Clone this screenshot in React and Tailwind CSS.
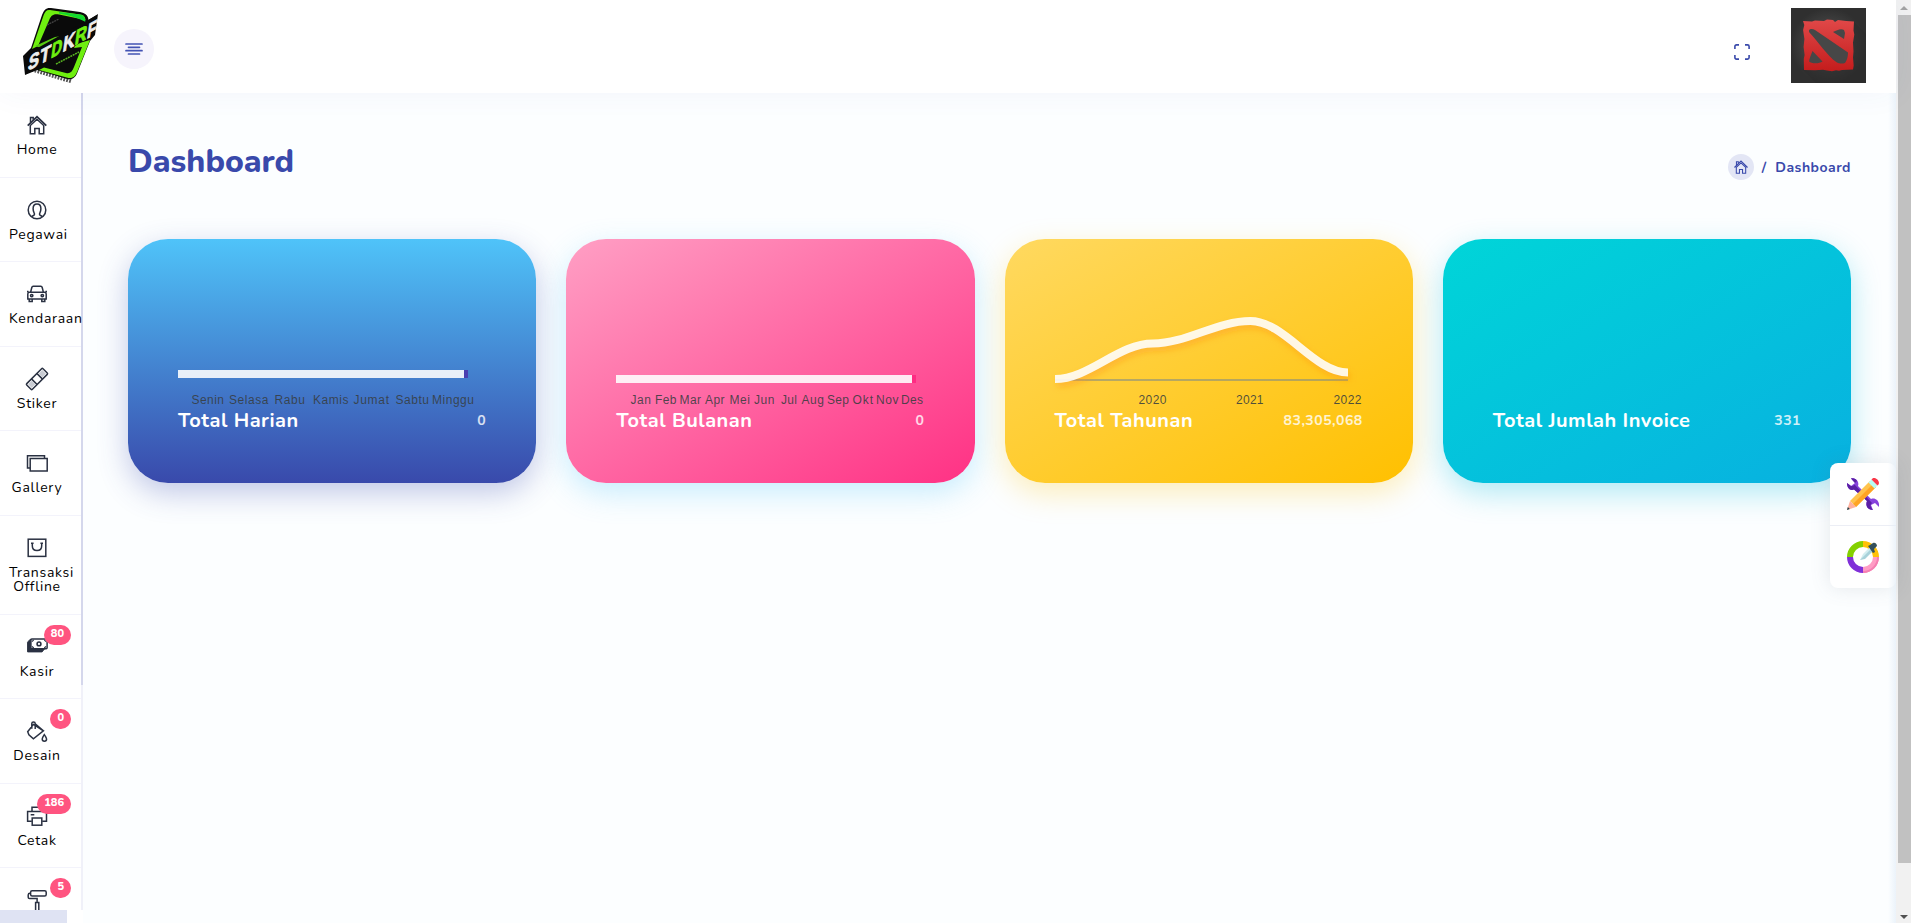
import React from "react";

const INK = "#2a3142";

const icon = {
  home: (
    <g>
      <path d="M.7 10.700 10 1.700l9.300 9" strokeWidth="1.700" />
      <path d="M3.500 7.500V2.600h2.700v2.200M3.300 10.500v8.300h4.500v-5.300h4.400v5.300h4.500v-8.300L10 4.200z" />
    </g>
  ),
  user: (
    <g>
      <circle cx="10" cy="10" r="8.800" />
      <path d="M4.500 16.600c1.200-1.100 3-.9 3-2.300 0-1.200-1.400-2.500-1.400-5.600C6.100 5.600 7.500 4 10 4s3.900 1.600 3.900 4.700c0 3.100-1.400 4.400-1.400 5.600 0 1.400 1.800 1.200 3 2.300" />
    </g>
  ),
  car: (
    <g>
      <path d="M3.600 8.300 4.800 3.500c.2-.8.600-1.200 1.400-1.200h7.600c.8 0 1.200.4 1.400 1.200l1.200 4.800M0 7.400h1.500M18.500 7.400H20M.8 14.900v-5c0-1 .6-1.600 1.600-1.600h15.200c1 0 1.600.6 1.600 1.600v5zM2.200 15v2.600h3V15M14.800 15v2.600h3V15" />
      <circle cx="4.700" cy="11.600" r="1.200" />
      <circle cx="15.300" cy="11.600" r="1.200" />
    </g>
  ),
  sticker: (
    <g transform="rotate(-45 10 10)">
      <rect x="-1.500" y="6" width="23" height="8" rx="1" />
      <rect x="0" y="7.400" width="5" height="5.200" fill="#c9ccd3" stroke="none" />
      <rect x="15" y="7.400" width="5" height="5.200" fill="#c9ccd3" stroke="none" />
      <path d="M6.200 6v8M13.800 6v8" />
    </g>
  ),
  gallery: (
    <g>
      <path d="M3.300 15H.5V2.700h17v2.600" />
      <rect x="3.200" y="5.500" width="17" height="12.500" />
    </g>
  ),
  bag: (
    <g>
      <rect x="1.200" y="1.200" width="17.600" height="17.200" />
      <path d="M4 5.300h2.600M13.400 5.300H16M5.300 5.500v2.200c0 2.800 1.900 4.800 4.700 4.800s4.700-2 4.700-4.800V5.500" />
    </g>
  ),
  cash: (
    <g>
      <path d="M.6 5.200 3 2.400h2v9.400h12.500l-2.400 3.100H.6z" fill={INK} stroke={INK} strokeWidth="1" />
      <rect x="3.900" y="2" width="16.200" height="9.800" rx="1" fill="#fff" />
      <circle cx="12" cy="6.900" r="1.900" strokeWidth="1.600" />
      <path d="M5 4.700 6.700 2.800M19 4.700 17.300 2.800M5 9.300 6.700 11M19 9.300 17.300 11" strokeWidth="1.100" />
    </g>
  ),
  bucket: (
    <g>
      <path d="M4.800 7.800V2.600C4.800.5 8.200.5 8.200 2.600V8M6.500 3.400.700 10.700l1.200 3 4.500 4.100 10-7.900zM8.200 2.800l8.200 7.100" />
      <path d="M17.300 13.600c-1.500 2.200-2.100 3.200-2.100 4.400a2.200 2.200 0 0 0 4.400 0c0-1.200-.7-2.200-2.300-4.400z" />
    </g>
  ),
  printer: (
    <g>
      <path d="M5 5.500V1.200h10v4.300M4.800 15.300H.6V5.600h18.900v9.700h-4.300M3.700 8.800h3.600" />
      <rect x="5.200" y="12" width="9.600" height="7.200" />
    </g>
  ),
  roller: (
    <g>
      <rect x="3.600" y=".8" width="15.600" height="5.200" rx="1.500" />
      <path d="M3.600 3.300H3c-1 0-1.800.6-1.800 1.600v2.300c0 .8.500 1.300 1.300 1.300h7.600v3.700M8.600 12.400h3.200V22H8.600z" />
    </g>
  ),
};

function Glyph({ name, size = 20, color = INK, className = "" }) {
  return (
    <svg
      width={size}
      height={size}
      viewBox="0 0 20 20"
      fill="none"
      stroke={color}
      strokeWidth="1.5"
      className={`shrink-0 overflow-visible ${className}`}
    >
      {icon[name]}
    </svg>
  );
}

const menu = [
  { name: "home", label: "Home", box: "h-[85px]" },
  { name: "user", label: "Pegawai", box: "h-[84px]" },
  { name: "car", label: "Kendaraan", box: "h-[85px]" },
  { name: "sticker", label: "Stiker", box: "h-[84px]" },
  { name: "gallery", label: "Gallery", box: "h-[85px]" },
  { name: "bag", label: "Transaksi Offline", box: "h-[99px]" },
  { name: "cash", label: "Kasir", box: "h-[84px]", badge: "80" },
  { name: "bucket", label: "Desain", box: "h-[85px]", badge: "0" },
  { name: "printer", label: "Cetak", box: "h-[84px]", badge: "186" },
  { name: "roller", label: "", box: "h-[84px]", badge: "5" },
];

function Logo() {
  return (
    <svg width="77" height="77" viewBox="0 0 77 77" className="shrink-0 overflow-visible">
      <path d="M10 62 50 74" stroke="#555" strokeWidth="5" strokeDasharray="1.800 1.200" />
      <path d="M29 1 58 5c5 1 8 3 8.500 8L76 7l-3 21-5 6-12 30c-2 6-5 9-11 8L15 63 3 68 1 49l8-8L20 8c2-5 4-7.500 9-7z" fill="#0a0a0a" />
      <path d="M28 3 58 7.500c4 .6 5 2 5.500 5.500L37 7.500c-6-1-8 1-10 6L16 39l-6 3L21.500 8.500C23 4.500 24.500 2.500 28 3z" fill="#6fef10" />
      <path d="M37 5 58 7.500c4 .6 5.500 3.500 5.500 7.500C56 11 48 8.500 37 6.500z" fill="#12d930" />
      <path d="m68 33-12.500 31c-2 5-4 7.500-9 7L17 63l5-2.500 22 5.500c4 1 6-1 8-6l8-20-8 1 2-4z" fill="#6fef10" />
      <path d="M13 39 33 30l14-2L22 42z" fill="#57c912" />
      <path d="M3 48 75 8l-3 20L4 67z" fill="#0a0a0a" />
      <g transform="matrix(.9 -.49 -.14 1 5.500 64)" fontFamily="Liberation Sans, Arial, sans-serif" fontWeight="700" fontSize="21.500" strokeWidth=".9">
        <text x="0" y="0" textLength="12" lengthAdjust="spacingAndGlyphs" fill="#eee" stroke="#eee">S</text>
        <text x="13" y="0" textLength="11.500" lengthAdjust="spacingAndGlyphs" fill="#eee" stroke="#eee">T</text>
        <text x="25.500" y="0" textLength="12" lengthAdjust="spacingAndGlyphs" fill="#6fef10" stroke="#6fef10">D</text>
        <text x="38.500" y="0" textLength="13" lengthAdjust="spacingAndGlyphs" fill="#eee" stroke="#eee">K</text>
        <text x="52" y="0" textLength="13" lengthAdjust="spacingAndGlyphs" fill="#6fef10" stroke="#6fef10">R</text>
        <text x="65.500" y="0" textLength="10" lengthAdjust="spacingAndGlyphs" fill="#eee" stroke="#eee">F</text>
      </g>
      <path d="m25 18 12-6" stroke="#444" strokeWidth="1.300" strokeDasharray="2 .7" />
      <path d="M34 57l23-12" stroke="#57b321" strokeWidth="1.500" strokeDasharray="2 .7" />
    </svg>
  );
}

function Avatar() {
  return (
    <svg width="75" height="75" viewBox="0 0 75 75" className="shrink-0">
      <defs>
        <radialGradient id="avBg"><stop offset="0" stopColor="#5a5a5a" /><stop offset="1" stopColor="#2f2f2f" /></radialGradient>
        <linearGradient id="avRed" x2="0" y2="1"><stop offset="0" stopColor="#e04848" /><stop offset="1" stopColor="#c41c1c" /></linearGradient>
      </defs>
      <rect width="75" height="75" fill="url(#avBg)" />
      <path d="M63 14 75 26v49H25L12 62z" fill="#2b2b2b" opacity=".6" />
      <path fill="url(#avRed)" d="M12 13l9 .500 3-1 9 .5 3-1.500 6 .500 2 2 3-2 8 1 8 .5-.5 9 .8 4-1.300 8 .500 9-.5 6 .7 8-.7 4-11 .5-3 .8-3-.5-4 1-5-.8-4-.7-8 .5-11-.3-.2-11 .8-4-1-8 .8-8-1.300-9 1.200-5z" />
      <path d="M18 22c1-1.500 4-1.500 6 0l33 22.500c0 4-1 8-3 10.500-3 1-6 .5-8-.5C36 48 27 33 18 24zM42 24c4-2 8-4 11-2l1 3-1 6zM21.500 43l10 10.500c-3 2-9 2.500-13 .5-1-2 2-8 3-11z" fill="#474747" />
    </svg>
  );
}

function Chart({ id, labels, line, endX, flood, axis }) {
  return (
    <svg width="308" height="118" viewBox="0 0 308 118" className="block overflow-visible">
      <defs>
        <filter id={id} x="-10%" y="-50%" width="125%" height="200%">
          <feGaussianBlur stdDeviation="3" />
        </filter>
      </defs>
      {axis && <path d="M0 92H293" stroke="#6e8192" strokeOpacity=".5" strokeWidth="2" />}
      {axis ? (
        <path d={line} transform="translate(2 4)" fill="none" stroke={flood} strokeOpacity=".4" strokeWidth="8" filter={`url(#${id})`} />
      ) : (
        <rect x={endX} y={line - 4} width="4" height="8" fill={flood} />
      )}
      <path d={axis ? line : `M0 ${line}H${endX}`} fill="none" stroke="#fff" strokeOpacity=".88" strokeWidth="8" />
      <g fill="#373d3f" fillOpacity=".88" fontFamily="Liberation Sans, Arial, sans-serif" fontSize="12" letterSpacing=".5">
        {labels.map(([text, x, width]) => (
          <text key={text} x={x} y="116" textLength={width} lengthAdjust="spacing">{text}</text>
        ))}
      </g>
    </svg>
  );
}

const cards = [
  {
    title: "Total Harian", value: "0",
    skin: "bg-[linear-gradient(180deg,#4fc3f9_0%,#3949ab_100%)] shadow-[0_10px_30px_rgba(57,73,171,0.3)]",
    chart: {
      id: "daily", line: 86, endX: 286, flood: "#4a3fb0",
      labels: [["Senin", 13.500, 33], ["Selasa", 51, 40], ["Rabu", 96.500, 31], ["Kamis", 135, 36], ["Jumat", 175.500, 36], ["Sabtu", 217.500, 34], ["Minggu", 254, 42.500]],
    },
  },
  {
    title: "Total Bulanan", value: "0",
    skin: "bg-[linear-gradient(150deg,#ff9fc4_0%,#ff3184_100%)] shadow-[0_10px_30px_rgba(79,195,247,0.3)]",
    chart: {
      id: "monthly", line: 91, endX: 296, flood: "#ff2c83",
      labels: [["Jan", 14.500, 21], ["Feb", 39, 22], ["Mar", 63.500, 22], ["Apr", 89, 20], ["Mei", 113.500, 21], ["Jun", 138, 21], ["Jul", 165, 16.500], ["Aug", 185.500, 23], ["Sep", 211, 22.500], ["Okt", 236.500, 21], ["Nov", 260, 23], ["Des", 285, 22.500]],
    },
  },
  {
    title: "Total Tahunan", value: "83,305,068",
    skin: "bg-[linear-gradient(150deg,#ffd960_0%,#ffc000_100%)] shadow-[0_10px_30px_rgba(255,193,7,0.28)]",
    chart: {
      id: "yearly", axis: true, flood: "#ff8c1a",
      line: "M0 91C34.200 91 63.500 55.500 97.700 55.500C131.900 55.500 161.200 33 195.400 33C229.600 33 258.900 84.500 293 84.500",
      labels: [["2020", 83.500, 28.500], ["2021", 181, 28], ["2022", 278.500, 28.500]],
    },
  },
  {
    title: "Total Jumlah Invoice", value: "331",
    skin: "bg-[linear-gradient(150deg,#00d5d8_0%,#08b0e0_100%)] shadow-[0_10px_30px_rgba(0,184,217,0.3)]",
  },
];

function Card({ title, value, skin, chart }) {
  return (
    <section className={`flex h-[244px] flex-col rounded-[40px] px-[50px] pt-[49px] ${skin}`}>
      <div className="h-[121px]">{chart && <Chart {...chart} />}</div>
      <div className="flex items-center justify-between">
        <h2 className="text-[20px] leading-6 font-bold tracking-[0.5px] text-white">{title}</h2>
        <span className="text-[14px] leading-5 font-bold tracking-[0.5px] text-white/80">{value}</span>
      </div>
    </section>
  );
}

function ToolsIcon() {
  return (
    <svg width="32" height="32" viewBox="0 0 32 32">
      <path d="M4 .5C9-.5 12.500 4 11 8l13 13c5-2 9 3 8 8l-4-4-4 2 2 5c-5 0-8-4-6-9L7 11.500C3 13 0 10 0 5l4 3 4-3z" fill="#8742dc" />
      <path d="M0 5l4 3h2l1.500-1.500L25 25l-1.500 2c0 2 1.500 4 2.500 5-5 0-8-4-6-9L7 11.500C3 13 0 10 0 5zM4 .5C7 0 9 1 10 3L8 5z" fill="#5a1fa5" />
      <path d="m3 23 20-20 6 6L9 29z" fill="#ffc34d" />
      <path d="m6 26 20-20 3 3L9 29z" fill="#ffa424" />
      <path d="m3 23 6 6-9 3z" fill="#ffb09e" />
      <path d="m.8 29 2 2L0 32z" fill="#21424c" />
      <path d="m21.500 4.500 3-3 6 6-3 3z" fill="#b9fbf2" />
      <path d="m24.500 1.500 1-1c3-2 8 3 6 6l-1 1z" fill="#fa3648" />
    </svg>
  );
}

function PaletteIcon() {
  return (
    <svg width="32" height="32" viewBox="0 0 32 32" fill="none" strokeWidth="6">
      <path d="M3 16A13 13 0 0 1 16 3" stroke="#84d000" />
      <path d="M16 3a13 13 0 0 1 13 13" stroke="#ffc107" />
      <path d="M29 16a13 13 0 0 1-13 13" stroke="#ff9cc4" />
      <path d="M31 16A15 15 0 0 1 16 31" stroke="#f57fb2" strokeWidth="2" />
      <path d="M16 29A13 13 0 0 1 3 16" stroke="#8030d8" />
      <path d="m13 19 3-6 7-7 3 3-8 8z" fill="#d2edf0" />
      <path d="m13 19 4-4 7-7 2 2-8 8z" fill="#a8d2da" />
      <path d="m21 5 2-1 3-2c2-1 4 1 4 3l-3 3 1 3-2 1z" fill="#34505c" />
    </svg>
  );
}

export default function App() {
  return (
    <div className="flex h-[923px] w-[1911px] overflow-hidden bg-[#fcfeff] font-['Nunito','Open_Sans',sans-serif] text-[#3949ab]">
      <div className="flex w-[1896px] flex-col">
        <header className="z-10 flex h-[93px] shrink-0 items-start bg-white shadow-[0_0_30px_rgba(57,73,171,0.05)]">
          <div className="pt-[7px] pl-[22px]"><Logo /></div>
          <button className="mt-[29px] ml-[15px] flex size-10 items-center justify-center rounded-full bg-[#f6f4fc]">
            <svg width="18" height="14" viewBox="0 0 18 14" stroke="#4353b3" strokeWidth="1.700" strokeLinecap="round">
              <path d="M1 2h16M3.500 5.300h11M1 8.700h16M3.500 12h11" />
            </svg>
          </button>
          <div className="flex-1" />
          <svg width="16" height="16" viewBox="0 0 16 16" fill="none" stroke="#3949ab" strokeWidth="1.600" className="mt-11 mr-[41px]">
            <path d="M.9 5V2.500C.9 1.500 1.500.9 2.500.9H5M11 .9h2.500c1 0 1.600.6 1.600 1.600V5M15.100 11v2.500c0 1-.6 1.600-1.600 1.600H11M5 15.100H2.500c-1 0-1.600-.6-1.600-1.600V11" />
          </svg>
          <div className="mt-2 mr-[30px]"><Avatar /></div>
        </header>

        <div className="flex min-h-0 flex-1">
          <aside className="flex w-[83px] shrink-0 flex-col bg-white">
            <div className="flex h-[817px] w-[83px] overflow-hidden">
              <nav className="w-[81px] shrink-0">
                {menu.map(({ name, label, box, badge }) => (
                  <a key={name} className={`relative block border-b border-[#f3f3fb] pt-[22px] ${box}`}>
                    <Glyph name={name} className="ml-[27px]" />
                    <span className="mt-[8px] ml-[9px] block w-[56px] text-center text-[14px] leading-[14px] tracking-[0.7px] text-black">
                      {label}
                    </span>
                    {badge && (
                      <span className="absolute top-[10px] right-[10px] flex h-5 items-center rounded-full bg-[#ff5480] px-[7px] pb-[2px] text-[11px] font-extrabold text-white">
                        {badge}
                      </span>
                    )}
                  </a>
                ))}
              </nav>
              <div className="w-[2px] bg-[#f0f1f9]"><div className="h-[592px] bg-[#d4d7ec]" /></div>
            </div>
            <div className="h-[13px] w-[67px] bg-[#dfe3f3]" />
          </aside>

          <main className="min-w-0 flex-1 pr-[45px] pl-[45px]">
            <div className="flex h-[146px] items-start justify-between pt-[49px]">
              <h1 className="text-[32px] leading-10 font-extrabold">Dashboard</h1>
              <div className="mt-[12px] flex items-center gap-2">
                <span className="flex size-[26px] items-center justify-center rounded-full bg-[#e3e6f5]">
                  <Glyph name="home" size={14} color="#3949ab" />
                </span>
                <span className="mr-px text-[14px] font-bold">/</span>
                <span className="text-[14px] font-bold tracking-[0.5px]">Dashboard</span>
              </div>
            </div>
            <div className="grid grid-cols-4 gap-[30px]">
              {cards.map((card) => <Card key={card.title} {...card} />)}
            </div>
          </main>
        </div>
      </div>

      <div className="flex w-[15px] flex-col items-center bg-[#f1f1f1]">
        <div className="flex h-[15px] items-center"><svg width="8" height="4"><path d="M0 4 4 0l4 4z" fill="#a3a3a3" /></svg></div>
        <div className="ml-[2px] h-[848px] w-[13px] bg-[#c1c1c1]" />
        <div className="mt-auto flex h-[12px] items-center"><svg width="8" height="4"><path d="m0 0 4 4 4-4z" fill="#505050" /></svg></div>
      </div>

      <div className="absolute top-[463px] left-[1830px] z-20 w-[66px] overflow-hidden rounded-lg bg-white shadow-[0_0_20px_rgba(89,102,122,0.15)]">
        <div className="flex h-[63px] items-center justify-center border-b border-[#eceef5]"><ToolsIcon /></div>
        <div className="flex h-[62px] items-center justify-center"><PaletteIcon /></div>
      </div>
      <div className="absolute top-[93px] left-[1888px] z-30 h-[830px] w-[8px] bg-linear-to-r from-[#e4eef8]/0 to-[#e4eef8]/70" />
    </div>
  );
}
